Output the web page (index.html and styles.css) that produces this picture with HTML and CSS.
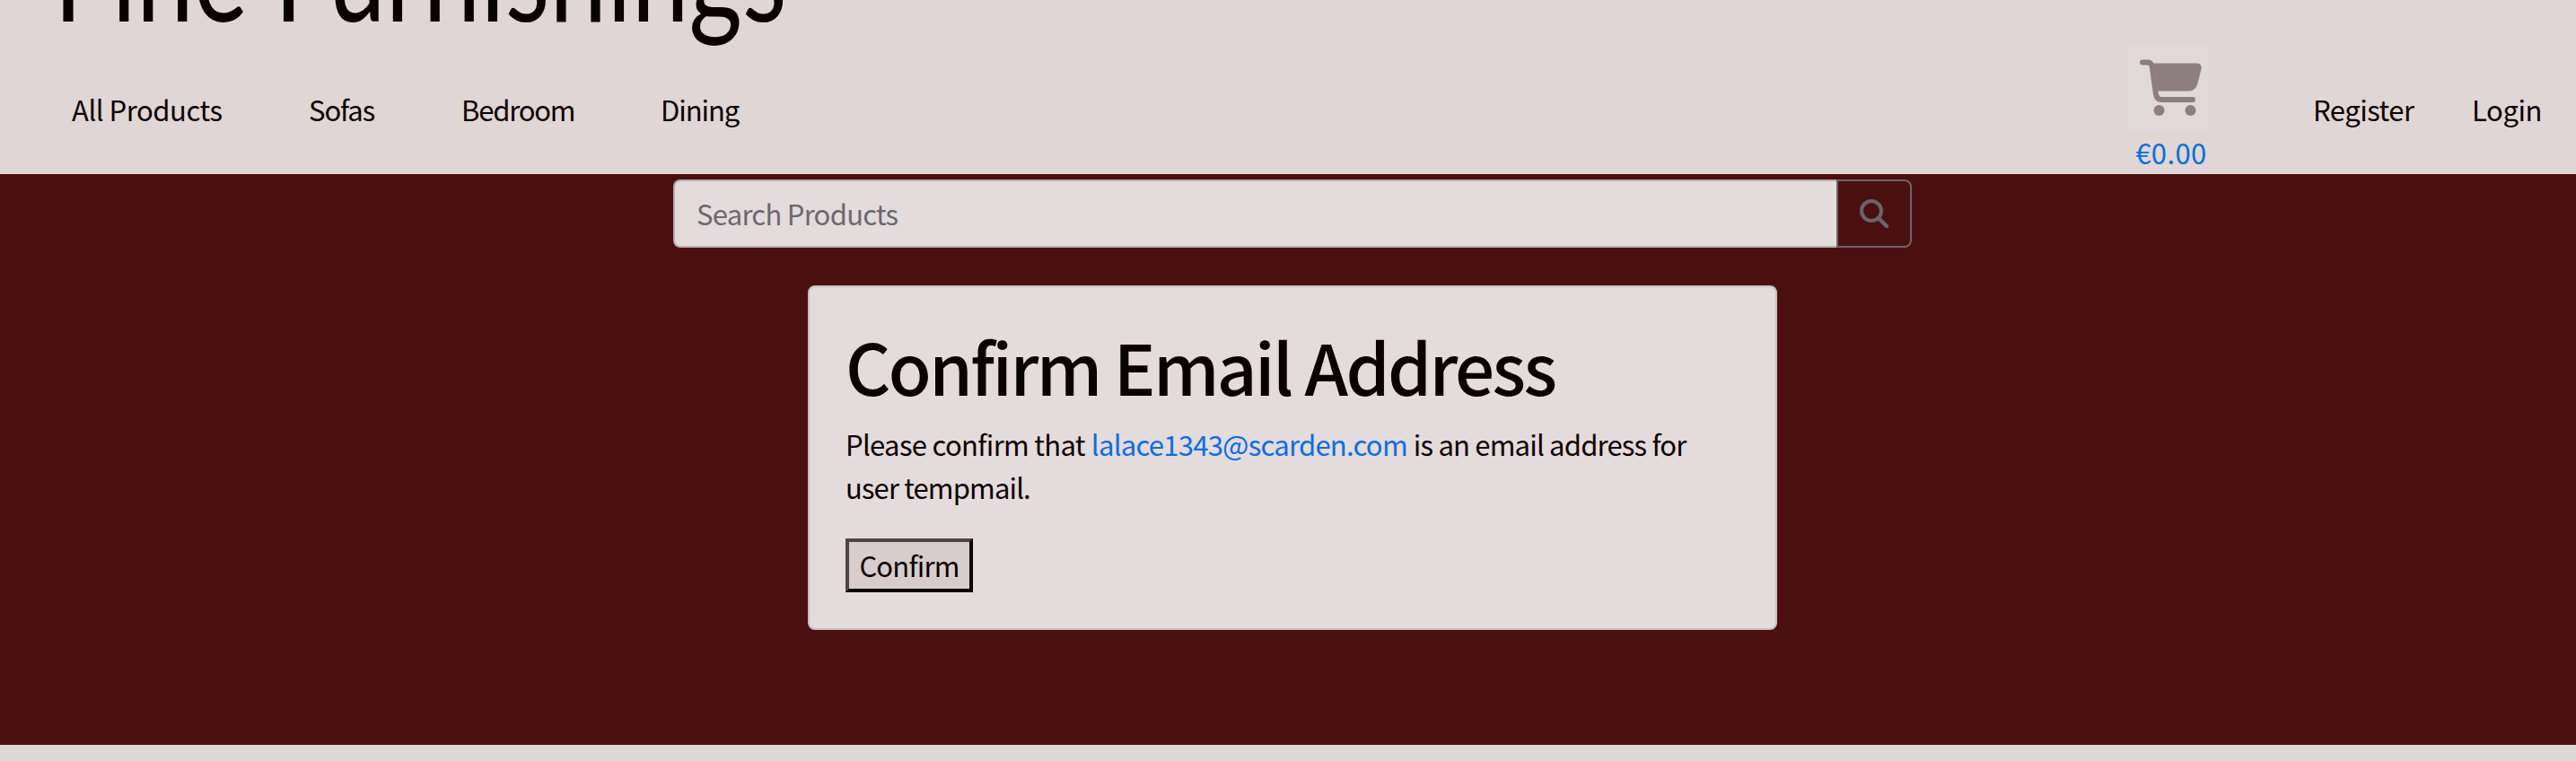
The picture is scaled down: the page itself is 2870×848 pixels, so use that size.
FILE: index.html
```html
<!DOCTYPE html>
<html lang="en">
<head>
<meta charset="utf-8">
<title>Fine Furnishings</title>
<link rel="stylesheet" href="styles.css">
</head>
<body>
<header class="header">
  <div class="brand"><span class="brand-name">Fine Furnishings</span></div>
  <nav class="nav">
    <a class="link all">All Products</a>
    <a class="link sofas">Sofas</a>
    <a class="link bedroom">Bedroom</a>
    <a class="link dining">Dining</a>
    <a class="cart">
      <svg class="cart-icon" viewBox="0 0 96 96"><path d="M16 19.500H22Q25 19.500 26.500 23L31 55Q32 61 37 61H72" fill="none" stroke="#8d7f80" stroke-width="6" stroke-linecap="round" stroke-linejoin="round"/><path d="M24 20.500H77Q82.500 21 81.500 27L77.500 43Q75 51.500 68 51.500H30Z" fill="#8d7f80"/><circle cx="34.500" cy="73" r="6" fill="#8d7f80"/><circle cx="69.500" cy="73" r="6" fill="#8d7f80"/></svg>
      <span class="total">€0.00</span>
    </a>
    <a class="link register">Register</a>
    <a class="link login">Login</a>
  </nav>
</header>
<main class="main">
  <form class="search">
    <div class="field"><span class="placeholder">Search Products</span></div>
    <div class="search-button"><svg class="search-icon" viewBox="0 0 32 32"><circle cx="13" cy="13" r="11" fill="none" stroke="#6c6368" stroke-width="4"/><path d="M21 21L30 30" stroke="#6c6368" stroke-width="4.500" stroke-linecap="round"/></svg></div>
  </form>
  <section class="card">
    <h1 class="title">Confirm Email Address</h1>
    <p class="message"><span class="lead">Please confirm that</span> <a class="email">lalace1343@scarden.com</a> <span class="tail">is an email address for</span><br><span class="user">user tempmail.</span></p>
    <button class="confirm" type="button">Confirm</button>
  </section>
</main>
</body>
</html>
```
FILE: styles.css
```css
* { box-sizing: border-box; }
body {
  margin: 0;
  height: 848px;
  overflow: hidden;
  background: #ddd8d7;
  color: #0b0001;
  font: 400 31px/48px "Noto Sans CJK JP", sans-serif;
}
.header { height: 194px; background: #e0d6d5; overflow: hidden; }
.brand { height: 50px; padding: 0 0 14px 60px; white-space: nowrap; display: flex; align-items: flex-end; }
.brand-name { font: 400 150px/140px Lato, sans-serif; transform: scaleX(.763); transform-origin: 0 50%; }
.nav { height: 144px; display: flex; align-items: flex-start; padding-left: 80px; }
.link { margin-top: 48px; white-space: nowrap; }
.all { width: 264px; letter-spacing: -.45px; }
.sofas { width: 170px; letter-spacing: -1.1px; }
.bedroom { width: 222px; letter-spacing: -1.2px; }
.dining { width: 1635px; letter-spacing: -1.1px; }
.cart { width: 96px; margin-right: 110px; display: flex; flex-direction: column; align-items: center; }
.cart-icon { width: 96px; height: 96px; background: #e1d8da; }
.total { color: #0a6edf; line-height: 48px; letter-spacing: .4px; }
.register { width: 177px; letter-spacing: -.5px; }
.login { letter-spacing: -.4px; }
.main { height: 636px; background: #4a1010; padding-top: 6px; }
.search { display: flex; width: 1380px; height: 76px; margin: 0 0 42px 750px; }
.field { width: 1296px; padding: 12px 24px; border: 2px solid #b7aeb2; border-right: 0; border-radius: 8px 0 0 8px; background: #e4dbdc; color: #6b696e; letter-spacing: -.73px; }
.search-button { width: 84px; border: 2px solid #6c6368; border-radius: 0 8px 8px 0; display: flex; align-items: center; justify-content: center; }
.search-icon { width: 32px; height: 32px; }
.card { width: 1080px; height: 384px; margin-left: 900px; padding: 39px 40px; border: 2px solid #c9bfc1; border-radius: 8px; background: #e4dbdc; }
.title { margin: 0 0 16px; font-size: 78px; font-weight: 500; line-height: 96px; letter-spacing: -2.6px; white-space: nowrap; }
.message { margin: 0 0 33px; white-space: nowrap; }
.lead { letter-spacing: -.66px; }
.email { color: #0a6edf; letter-spacing: -.73px; }
.tail { letter-spacing: -.8px; }
.user { letter-spacing: -.86px; }
.confirm { display: block; width: 142px; height: 60px; padding: 0 0 1px; border: 4px solid; border-color: #4f4546 #0b0001 #0b0001 #4f4546; background: #d7cdcc; color: inherit; font: inherit; letter-spacing: -.8px; }
```
